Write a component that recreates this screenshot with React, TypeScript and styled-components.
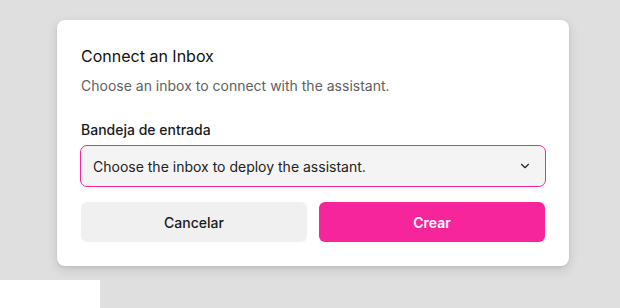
import React from "react";
import styled, { createGlobalStyle } from "styled-components";
import { ChevronDown } from "lucide-react";

const Global = createGlobalStyle`
  html, body { margin: 0; padding: 0; }
  body {
    font-family: Inter, "Noto Sans", sans-serif;
    background: #ffffff;
    -webkit-font-smoothing: antialiased;
  }
`;

const Page = styled.div`
  width: 620px;
  height: 308px;
  display: flex;
  flex-direction: column;
  background: #dfdfdf;
`;

const Overlay = styled.div`
  height: 280px;
  display: flex;
  align-items: flex-start;
  padding-top: 20px;
  padding-left: 57px;
  box-sizing: border-box;
`;

const Footer = styled.div`
  height: 28px;
  display: flex;
`;

const WhiteBlock = styled.div`
  width: 100px;
  background: #ffffff;
`;

const Dialog = styled.div`
  width: 512px;
  box-sizing: border-box;
  background: #ffffff;
  border-radius: 8px;
  padding: 24px;
  display: flex;
  flex-direction: column;
  box-shadow: 0 4px 12px rgba(0, 0, 0, 0.12), 0 1px 3px rgba(0, 0, 0, 0.08);
  position: relative;
  z-index: 1;
`;

const Title = styled.h2`
  margin: 0;
  font-size: 16px;
  line-height: 24px;
  font-weight: 400;
  color: #111111;
`;

const Description = styled.p`
  margin: 8px 0 0;
  font-size: 14px;
  line-height: 20px;
  color: #5f5f5f;
`;

const Field = styled.div`
  margin-top: 24px;
  display: flex;
  flex-direction: column;
  gap: 5px;
`;

const Label = styled.label`
  font-size: 14px;
  line-height: 20px;
  font-weight: 500;
  color: #1a1a1a;
`;

const Select = styled.button`
  margin: 0 -1px;
  height: 42px;
  box-sizing: border-box;
  display: flex;
  align-items: center;
  justify-content: space-between;
  padding: 0 13px 0 12px;
  background: #f4f4f4;
  border: 1px solid #f7259c;
  border-radius: 7px;
  font-family: inherit;
  font-size: 14px;
  color: #222222;
  cursor: pointer;
`;

const Actions = styled.div`
  margin-top: 15px;
  display: grid;
  grid-template-columns: 1fr 1fr;
  gap: 12px;
`;

const Button = styled.button<{ $primary?: boolean }>`
  height: 40px;
  border: none;
  border-radius: 6px;
  font-family: inherit;
  font-size: 14px;
  font-weight: ${(p) => (p.$primary ? 600 : 500)};
  background: ${(p) => (p.$primary ? "#f7259c" : "#f0f0f0")};
  color: ${(p) => (p.$primary ? "#ffffff" : "#1a1a1a")};
  cursor: pointer;
`;

export default function App() {
  return (
    <>
      <Global />
      <Page>
        <Overlay>
          <Dialog>
            <Title>Connect an Inbox</Title>
            <Description>Choose an inbox to connect with the assistant.</Description>
            <Field>
              <Label>Bandeja de entrada</Label>
              <Select>
                <span>Choose the inbox to deploy the assistant.</span>
                <ChevronDown size={14} strokeWidth={2} color="#222" />
              </Select>
            </Field>
            <Actions>
              <Button>Cancelar</Button>
              <Button $primary>Crear</Button>
            </Actions>
          </Dialog>
        </Overlay>
        <Footer>
          <WhiteBlock />
        </Footer>
      </Page>
    </>
  );
}
